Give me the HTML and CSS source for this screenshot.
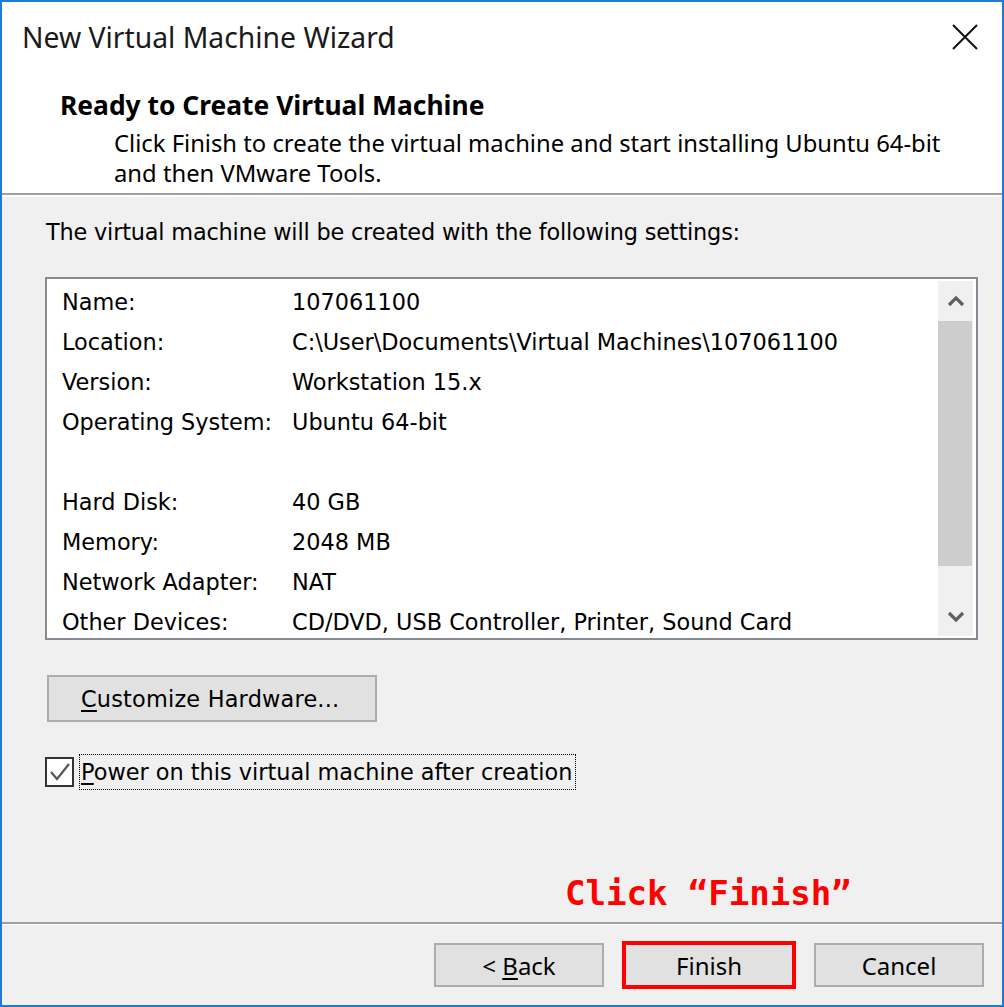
FILE: index.html
```html
<!DOCTYPE html>
<html>
<head>
<meta charset="utf-8">
<link rel="stylesheet" href="styles.css">
</head>
<body>
<div class="window">
  <div class="header">
    <div class="titlebar">
      <span class="title">New Virtual Machine Wizard</span>
      <svg class="close" width="26" height="26" viewBox="0 0 26 26"><path d="M1 1L25 25M25 1L1 25" stroke="#111" stroke-width="2" fill="none"/></svg>
    </div>
    <div class="heading">Ready to Create Virtual Machine</div>
    <div class="subtitle">Click Finish to create the virtual machine and start installing Ubuntu 64-bit<br>and then VMware Tools.</div>
  </div>
  <div class="body">
    <div class="intro">The virtual machine will be created with the following settings:</div>
    <div class="listbox">
      <div class="rows">
        <div class="row"><span class="lbl">Name:</span><span class="val">107061100</span></div>
        <div class="row"><span class="lbl">Location:</span><span class="val">C:\User\Documents\Virtual Machines\107061100</span></div>
        <div class="row"><span class="lbl">Version:</span><span class="val">Workstation 15.x</span></div>
        <div class="row"><span class="lbl">Operating System:</span><span class="val">Ubuntu 64-bit</span></div>
        <div class="row"><span class="lbl"></span><span class="val"></span></div>
        <div class="row"><span class="lbl">Hard Disk:</span><span class="val">40 GB</span></div>
        <div class="row"><span class="lbl">Memory:</span><span class="val">2048 MB</span></div>
        <div class="row"><span class="lbl">Network Adapter:</span><span class="val">NAT</span></div>
        <div class="row"><span class="lbl">Other Devices:</span><span class="val">CD/DVD, USB Controller, Printer, Sound Card</span></div>
      </div>
      <div class="scrollbar">
        <div class="sb-btn"><svg width="18" height="12" viewBox="0 0 18 12"><path d="M2 10L9 3L16 10" stroke="#606060" stroke-width="3.2" fill="none"/></svg></div>
        <div class="sb-thumb"></div>
        <div class="sb-track"></div>
        <div class="sb-btn down"><svg width="18" height="12" viewBox="0 0 18 12"><path d="M2 2L9 9L16 2" stroke="#606060" stroke-width="3.2" fill="none"/></svg></div>
      </div>
    </div>
    <div class="custom-btn"><span><span class="ul">C</span>ustomize Hardware...</span></div>
    <div class="check-row">
      <span class="checkbox"><svg width="24" height="24" viewBox="0 0 24 24"><path d="M3 12L9 19L21 4" stroke="#555" stroke-width="2.2" fill="none"/></svg></span>
      <span class="check-label"><span class="ul">P</span>ower on this virtual machine after creation</span>
    </div>
    <div class="annot">Click “Finish”</div>
  </div>
  <div class="footer">
    <div class="btn"><span>&lt; <span class="ul">B</span>ack</span></div>
    <div class="btn finish"><span>Finish</span></div>
    <div class="btn"><span>Cancel</span></div>
  </div>
</div>
</body>
</html>
```
FILE: styles.css
```css
html, body {
  margin: 0;
  padding: 0;
  background: #f0f0f0;
}
.window {
  width: 1004px;
  height: 1007px;
  box-sizing: border-box;
  border: 2px solid #1f7ad6;
  display: flex;
  flex-direction: column;
  background: #f0f0f0;
  color: #000;
}
.header {
  background: #fff;
  height: 191px;
  border-bottom: 2px solid #a0a0a0;
  flex: none;
  font-family: "Noto Sans", "Open Sans", sans-serif;
}
.titlebar {
  height: 70px;
  display: flex;
  align-items: center;
  justify-content: space-between;
  padding: 0 24px 0 20px;
}
.title {
  font-size: 28.3px;
  color: #1a1a1a;
}
.heading {
  margin-top: 16px;
  padding-left: 58px;
  font-weight: bold;
  font-size: 26.4px;
  line-height: 34px;
}
.subtitle {
  margin-top: 6px;
  padding-left: 112px;
  font-size: 23.8px;
  line-height: 30px;
}
.body {
  flex: 1;
  border-top: 2px solid #fff;
  padding: 0 24px 0 43px;
  display: flex;
  flex-direction: column;
  font-family: "DejaVu Sans", sans-serif;
  font-size: 22.4px;
}
.intro {
  margin-top: 20px;
  line-height: 30px;
  padding-left: 1px;
  letter-spacing: -0.18px;
}
.listbox {
  margin-top: 30px;
  height: 363px;
  box-sizing: border-box;
  border: 2px solid #868a92;
  background: #fff;
  padding: 2px 3px 2px 0;
  display: flex;
  overflow: hidden;
}
.rows {
  flex: 1;
  padding-left: 15px;
  padding-top: 1px;
  overflow: hidden;
}
.row {
  display: flex;
  height: 40px;
  line-height: 40px;
  white-space: nowrap;
}
.lbl {
  width: 230px;
  flex: none;
}
.scrollbar {
  width: 35px;
  background: #f0f0f0;
  display: flex;
  flex-direction: column;
}
.sb-btn {
  height: 40px;
  display: flex;
  align-items: center;
  justify-content: center;
}
.sb-btn.down {
  height: 38px;
}
.sb-thumb {
  height: 245px;
  background: #cdcdcd;
  margin: 0 1px 0 0;
}
.sb-track {
  flex: 1;
}
.custom-btn {
  margin-top: 35px;
  margin-left: 2px;
  width: 330px;
  height: 47px;
  box-sizing: border-box;
  border: 2px solid #adadad;
  background: #e1e1e1;
  display: flex;
  align-items: center;
  padding-left: 32px;
  letter-spacing: 0.2px;
}
.ul {
  text-decoration: underline;
  text-underline-offset: 3px;
}
.check-row {
  margin-top: 32px;
  height: 36px;
  display: flex;
  align-items: center;
}
.checkbox {
  width: 29px;
  height: 30px;
  box-sizing: border-box;
  border: 2px solid #333;
  background: #fff;
  display: flex;
  align-items: center;
  justify-content: center;
  margin-right: 5px;
}
.check-label {
  border: 1px dotted #000;
  height: 36px;
  box-sizing: border-box;
  line-height: 34px;
  padding: 0 3px 0 1px;
}
.annot {
  margin-top: 83px;
  margin-left: 520px;
  font-family: "DejaVu Sans Mono", monospace;
  font-weight: bold;
  font-size: 34px;
  line-height: 40px;
  color: #ff0000;
}
.footer {
  flex: none;
  height: 83px;
  box-sizing: border-box;
  border-top: 2px solid #a0a0a0;
  box-shadow: inset 0 1px #fff;
  padding: 19px 18px 0 0;
  display: flex;
  justify-content: flex-end;
  gap: 20px;
  font-family: "Noto Sans", "Open Sans", sans-serif;
  font-size: 24px;
}
.btn {
  width: 170px;
  height: 44px;
  box-sizing: border-box;
  border: 2px solid #adadad;
  background: #e1e1e1;
  display: flex;
  align-items: center;
  justify-content: center;
}
.btn.finish {
  border-color: #0078d7;
  outline: 4px solid #ff0000;
  outline-offset: -2px;
}
```
